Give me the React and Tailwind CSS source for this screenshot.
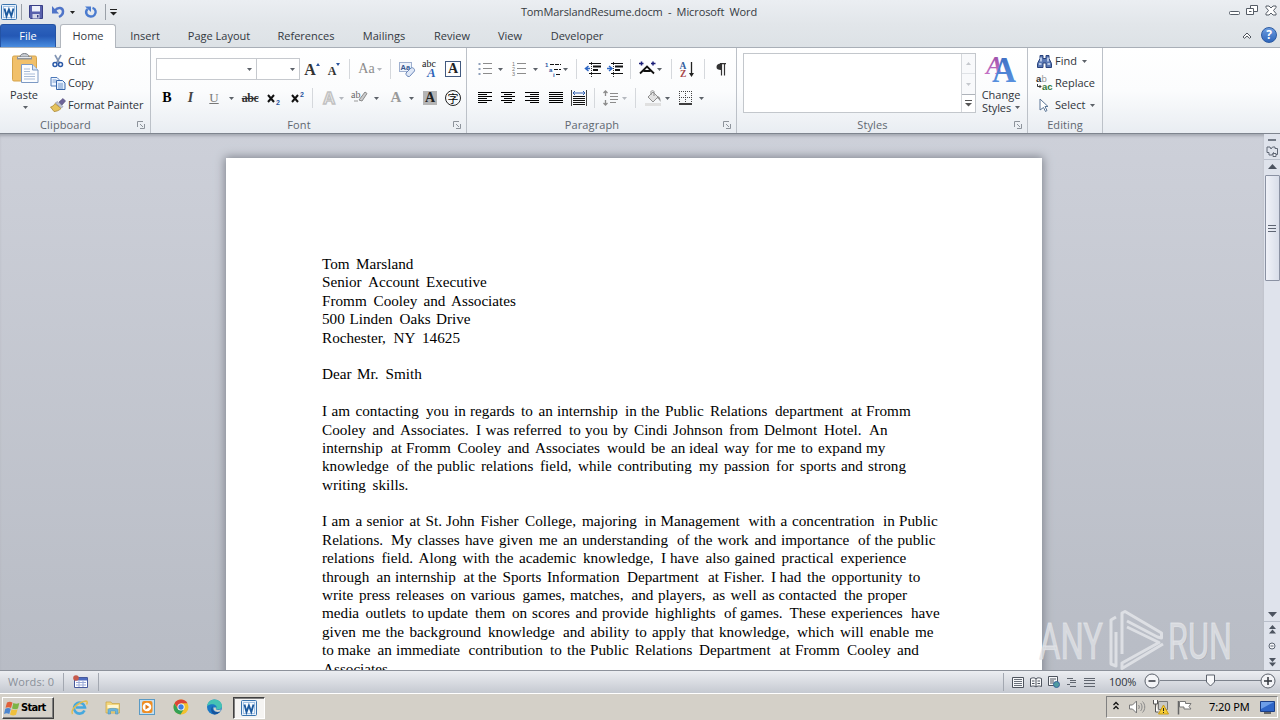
import clsx from "clsx";

const tabs = [
  { name: "Insert", width: "w-[58px]" },
  { name: "Page Layout", width: "w-[90px]" },
  { name: "References", width: "w-[84px]" },
  { name: "Mailings", width: "w-[72px]" },
  { name: "Review", width: "w-[64px]" },
  { name: "View", width: "w-[52px]" },
  { name: "Developer", width: "w-[82px]" },
];

// each line: the words and the x offset of every word from the left margin
const letter = [
  ["Tom Marsland", [0, 34]],
  ["Senior Account Executive", [0, 46, 104]],
  ["Fromm Cooley and Associates", [0, 51.5, 101.5, 129]],
  ["500 Linden Oaks Drive", [0, 27.5, 77.5, 114]],
  ["Rochester, NY 14625", [0, 71.5, 100]],
  null,
  ["Dear Mr. Smith", [0, 35, 63.5]],
  null,
  [
    "I am contacting you in regards to an internship in the Public Relations department at Fromm",
    [0, 9.5, 33.5, 104, 132, 148, 199, 216.5, 235, 303, 319, 343, 388, 453, 529, 544],
  ],
  [
    "Cooley and Associates. I was referred to you by Cindi Johnson from Delmont Hotel. An",
    [0, 50.5, 78, 154, 163.5, 191.5, 247, 263, 291, 312, 351, 407, 442, 502, 547],
  ],
  [
    "internship at Fromm Cooley and Associates would be an ideal way for me to expand my",
    [0, 69, 84, 135.5, 185.5, 213, 285, 329, 349, 367, 402, 433, 455, 479, 496, 544],
  ],
  [
    "knowledge of the public relations field, while contributing my passion for sports and strong",
    [0, 74.5, 92, 115, 159, 218, 256, 295.5, 377, 402, 454, 478, 519, 546],
  ],
  ["writing skills.", [0, 50.5]],
  null,
  [
    "I am a senior at St. John Fisher College, majoring in Management with a concentration in Public",
    [0, 9.5, 33.5, 44.5, 87.5, 103.5, 124, 158.5, 203, 260, 322.5, 338.5, 426.5, 458.5, 470, 561, 577],
  ],
  [
    "Relations. My classes have given me an understanding of the work and importance of the public",
    [0, 69, 95.5, 143, 177, 217, 241, 260, 355, 372, 395.5, 432.5, 459, 536, 552.5, 575.5],
  ],
  [
    "relations field. Along with the academic knowledge, I have also gained practical experience",
    [0, 59.5, 96.5, 140.5, 173, 197, 261, 339, 348, 383.5, 412.5, 459.5, 518.5],
  ],
  [
    "through an internship at the Sports Information Department at Fisher. I had the opportunity to",
    [0, 54.5, 73, 141.5, 156, 180.5, 225, 305, 386, 401.5, 449, 457.5, 485, 509.5, 586.5],
  ],
  [
    "write press releases on various games, matches, and players, as well as contacted the proper",
    [0, 37, 74, 128.5, 148.5, 200.5, 248, 309.5, 336, 390.5, 408.5, 440, 456.5, 522, 545.5],
  ],
  [
    "media outlets to update them on scores and provide highlights of games. These experiences have",
    [0, 43.5, 90, 105.5, 153, 190, 210, 253.5, 280, 333, 402, 418, 467.5, 509, 589],
  ],
  [
    "given me the background knowledge and ability to apply that knowledge, which will enable me",
    [0, 40, 63.5, 87.5, 166, 241, 268.5, 313, 330, 369, 397, 475, 518, 547.5, 593],
  ],
  [
    "to make an immediate contribution to the Public Relations Department at Fromm Cooley and",
    [0, 15.5, 55.5, 74, 146.5, 228, 245, 268, 313, 377, 457.5, 473, 525, 575],
  ],
  ["Associates", [1]],
];

const Line = ({ line }) => {
  if (!line) return <div className="h-[18.4px]" />;
  const [text, offsets] = line;
  const words = text.split(" ");
  return (
    <div className="flex h-[18.4px] whitespace-pre leading-[18.4px]">
      {words.map((word, i) => (
        <span
          key={i}
          className="shrink-0"
          style={{
            width: (offsets[i + 1] ?? offsets[i] + 70) - offsets[i],
            marginLeft: i === 0 ? offsets[0] : 0,
          }}
        >
          {word + " "}
        </span>
      ))}
    </div>
  );
};

const Svg = ({ w, h, className, children }) => (
  <svg
    width={w}
    height={h}
    viewBox={`0 0 ${w} ${h}`}
    className={clsx("shrink-0 overflow-visible", className)}
    fill="none"
  >
    {children}
  </svg>
);

const Slot = ({ className, children }) => (
  <div className={clsx("flex h-[22px] shrink-0 items-center justify-center", className)}>{children}</div>
);

const Arrow = ({ dim, className }) => (
  <Svg w={5} h={3} className={className}>
    <path d="M0 0h5L2.500 3z" fill={dim ? "#b4b8be" : "#5c6168"} />
  </Svg>
);

const Sep = () => <div className="h-5 w-px bg-[#d5d8dc]" />;

const Launcher = () => (
  <Svg w={8} h={8}>
    <path d="M.5 6V.5H6" stroke="#8d939b" />
    <path d="M3 3l3 3M7.5 3v4.500H3" stroke="#8d939b" />
  </Svg>
);

const Group = ({ title, width, launcher, children }) => (
  <div className={clsx("flex h-[85px] shrink-0 flex-col border-r border-[#bcc1c8]", width)}>
    <div className="h-[69px]">{children}</div>
    <div className="flex h-4 items-center pr-[5px] text-[#5f6770]">
      <span className={clsx("flex-1 text-center tracking-[0.1px]", launcher ? "pr-[6px]" : "pl-[5px]")}>{title}</span>
      {launcher && <Launcher />}
    </div>
  </div>
);

const Lines = ({ rows, color = "#000", w = 14 }) => (
  <Svg w={w} h={13}>
    {rows.map(([x, len], i) => (
      <path key={i} d={`M${x} ${i * 2 + 0.5}h${len}`} stroke={color} />
    ))}
  </Svg>
);

const Scissors = () => (
  <Svg w={12} h={14}>
    <path d="M3 1l4.500 8M9 1L4.500 9" stroke="#8295b4" strokeWidth="1.6" />
    <circle cx="3" cy="10.500" r="2" stroke="#2c5aa8" strokeWidth="1.5" />
    <circle cx="8.500" cy="10.500" r="2" stroke="#2c5aa8" strokeWidth="1.5" />
  </Svg>
);

const CopyIcon = () => (
  <Svg w={16} h={14}>
    <path d="M1 1.500h6l2 2V10H1z" fill="#eef5ff" stroke="#4c78b8" />
    <path d="M2.500 4h4M2.500 6h4" stroke="#7d9fd0" />
    <path d="M6.500 4.500h6l2.500 2.500v6.500H6.500z" fill="#e6f0fd" stroke="#3766ab" />
    <path d="M8 8h5M8 10h5M8 12h5" stroke="#6d93cb" />
  </Svg>
);

const Brush = () => (
  <Svg w={16} h={14}>
    <path d="M9 4l4-3.500L15.500 3 12 7z" fill="#6d6399" stroke="#4a4372" strokeWidth=".6" />
    <path d="M7 3.500l6 5-1.500 1.500-6-5z" fill="#c3c7d6" stroke="#70758e" strokeWidth=".5" />
    <path d="M5 5.500l6 5c-2 2-4.500 3-7 3L.5 9C2.500 8.500 4 7.500 5 5.500z" fill="#e5c35c" stroke="#a07b25" strokeWidth=".7" />
  </Svg>
);

const PasteIcon = () => (
  <Svg w={27} h={31}>
    <rect x=".5" y="3" width="24" height="25" rx="1.500" fill="#f1c06a" stroke="#d5a44c" />
    <path d="M5 3.500h15v3H5z" fill="#8f949b" />
    <path d="M8 4c0-2 2-3.500 4.500-3.500S17 2 17 4z" fill="#c8ccd2" stroke="#777c84" />
    <path d="M6 4.500h13" stroke="#e8eaed" />
    <path d="M9.500 11.500h11l5.500 5.500v12.500H9.500z" fill="#fbfdff" stroke="#7d9ac4" />
    <path d="M20.500 11.500V17H26" fill="#d6e3f4" stroke="#7d9ac4" />
    <path d="M12 16h6M12 18.500h6M12 21h11M12 23.500h11M12 26h11" stroke="#a9bcd8" />
  </Svg>
);

const Clipboard = () => (
  <Group title="Clipboard" width="w-[151px]" launcher>
    <div className="flex pt-[2px]">
      <div className="flex w-12 flex-col items-center pl-[2px] pt-[3px]">
        <PasteIcon />
        <span className="mt-[4px] -ml-[2px] leading-[14px]">Paste</span>
        <Arrow className="mt-[4px]" />
      </div>
      <div className="flex flex-col">
        {[
          ["Cut", Scissors],
          ["Copy", CopyIcon],
          ["Format Painter", Brush],
        ].map(([name, Icon]) => (
          <div key={name} className="flex h-[22px] items-center">
            <div className="flex w-5 justify-center">
              <Icon />
            </div>
            <span className="tracking-[-0.1px]">{name}</span>
          </div>
        ))}
      </div>
    </div>
  </Group>
);

const FontGroup = () => (
  <Group title="Font" width="w-[316px]" launcher>
    <div className="flex pl-[5px] pt-[10px]">
      <div className="flex h-[22px] w-[101px] items-center justify-end border border-[#c6c9ce] bg-white pr-1">
        <Arrow />
      </div>
      <div className="flex h-[22px] w-[43px] items-center justify-end border border-l-0 border-[#c6c9ce] bg-white pr-1">
        <Arrow />
      </div>
      <Slot className="w-6">
        <span className="pt-[2px] font-['Liberation_Serif',serif] text-[16px] font-bold text-[#333]">A</span>
        <Svg w={4} h={12}>
          <path d="M0 3l2-3 2 3z" fill="#29549e" />
        </Svg>
      </Slot>
      <Slot className="w-5">
        <span className="pt-1 font-['Liberation_Serif',serif] text-[12px] font-bold text-[#333]">A</span>
        <Svg w={4} h={12}>
          <path d="M0 0h4L2 3z" fill="#29549e" />
        </Svg>
      </Slot>
      <Slot className="w-[11px]"><Sep /></Slot>
      <Slot className="w-[30px] gap-[2px]">
        <span className="font-['Liberation_Serif',serif] text-[14px] text-[#8c8c8c]">Aa</span>
        <Arrow dim />
      </Slot>
      <Slot className="w-[10px]"><Sep /></Slot>
      <Slot className="w-6">
        <Svg w={17} h={17}>
          <rect x=".5" y="1.500" width="12" height="9" fill="#eef3fb" stroke="#9fb0cf" />
          <text x="1.500" y="9" fontSize="7.500" fontWeight="bold" fill="#35578f" fontFamily="Liberation Sans">Aa</text>
          <path d="M7 12l5-5c2-1 4 1 3.500 3l-5 5.500c-2 .5-4-1.500-3.500-3.500z" fill="#dfe8f7" stroke="#6a86b8" />
        </Svg>
      </Slot>
      <Slot className="w-[22px]">
        <Svg w={16} h={18}>
          <text x="0" y="7" fontSize="10" fill="#222" fontFamily="Liberation Serif" textLength="14">abc</text>
          <text x="5" y="17" fontSize="13" fontWeight="bold" fontStyle="italic" fill="#2e63b8" fontFamily="Liberation Serif">A</text>
        </Svg>
      </Slot>
      <Slot className="w-6">
        <div className="flex size-4 items-center justify-center border border-[#41597f] font-['Liberation_Serif',serif] text-[14px] font-bold text-[#222]">A</div>
      </Slot>
    </div>
    <div className="mt-[7px] flex pl-[5px] font-['Liberation_Serif',serif] text-black">
      <Slot className="w-[22px] text-[14px] font-black">B</Slot>
      <Slot className="w-[25px] text-[14px] font-bold italic text-[#444]">I</Slot>
      <Slot className="w-[22px] text-[13px] text-[#777] underline">U</Slot>
      <Slot className="w-3"><Arrow /></Slot>
      <Slot className="w-[26px] text-[12px] font-bold tracking-[-0.5px] text-[#333] line-through">abc</Slot>
      <Slot className="w-[21px]">
        <Svg w={13} h={14}>
          <path d="M1 4l6 7M7 4l-6 7" stroke="#111" strokeWidth="2" />
          <text x="9" y="13.500" fontSize="7" fontWeight="bold" fill="#29549e" fontFamily="Liberation Sans">2</text>
        </Svg>
      </Slot>
      <Slot className="w-[26px]">
        <Svg w={13} h={14}>
          <path d="M1 4l6 7M7 4l-6 7" stroke="#111" strokeWidth="2" />
          <text x="9" y="5.500" fontSize="7" fontWeight="bold" fill="#29549e" fontFamily="Liberation Sans">2</text>
        </Svg>
      </Slot>
      <Slot className="w-1"><Sep /></Slot>
      <Slot className="ml-[6px] w-[18px]">
        <Svg w={17} h={17}>
          <text x="2" y="14" fontSize="17" fontWeight="bold" fill="#fff" stroke="#c2c2c2" strokeWidth="1.5" fontFamily="Liberation Sans">A</text>
        </Svg>
      </Slot>
      <Slot className="w-[6px]"><Arrow dim /></Slot>
      <Slot className="ml-[2px] w-7 pb-1">
        <Svg w={18} h={14}>
          <text x="0" y="9" fontSize="10" fill="#666" fontFamily="Liberation Serif">ab</text>
          <path d="M8 11l6-8 2 1.500-5 7.500z" fill="#ccc" stroke="#8a8a8a" />
          <path d="M3 12h4" stroke="#999" />
        </Svg>
      </Slot>
      <Slot className="w-[5px]"><Arrow /></Slot>
      <Slot className="ml-[5px] w-6 pb-[3px] text-[15px] font-bold text-[#9a9a9a]">A</Slot>
      <Slot className="w-[6px]"><Arrow /></Slot>
      <Slot className="ml-[5px] w-[22px]">
        <div className="flex h-[14px] w-[14px] items-center justify-center bg-[#b5b5b5] text-[14px] font-bold text-[#222]">A</div>
      </Slot>
      <Slot className="w-6">
        <div className="flex size-4 items-center justify-center rounded-full border border-[#222] font-['Noto_Sans_CJK_SC',sans-serif] text-[11px] leading-none">字</div>
      </Slot>
    </div>
  </Group>
);

const full = [0, 14];
const Bullets = ({ numbers }) => (
  <Svg w={14} h={14}>
    {[2, 7, 12].map((y, i) => (
      <g key={y}>
        {numbers ? (
          <text x="0" y={y + 2} fontSize="5.500" fill="#777" fontFamily="Liberation Sans">{i + 1}</text>
        ) : (
          <rect x=".5" y={y - 1} width="2" height="2" fill="#8fa0ba" />
        )}
        <path d={`M5 ${y + 0.5 - 1}h9`} stroke="#8c8c8c" />
      </g>
    ))}
  </Svg>
);

const Indent = ({ right }) => (
  <Svg w={16} h={15}>
    <path d="M4 1.500h12M4 11.500h12" stroke="#111" />
    <path d="M8 4.500h8M8 8h5" stroke="#111" strokeWidth="2" />
    <path d="M6.500 0v15" stroke="#333" strokeDasharray="1 1" />
    {right ? (
      <path d="M0 6.500h4M2 4l3 2.500L2 9" stroke="#2f68c5" strokeWidth="1.5" />
    ) : (
      <path d="M5 6.500H1M3.500 4l-3 2.500 3 2.500" stroke="#2f68c5" strokeWidth="1.5" />
    )}
  </Svg>
);

const ParagraphGroup = () => (
  <Group title="Paragraph" width="w-[270px]" launcher>
    <div className="flex pl-[7px] pt-[10px]">
      <Slot className="w-[21px]"><Bullets /></Slot>
      <Slot className="w-[10px]"><Arrow /></Slot>
      <Slot className="w-7"><Bullets numbers /></Slot>
      <Slot className="w-1"><Arrow /></Slot>
      <Slot className="ml-2 w-4">
        <Svg w={16} h={15}>
          <text x="0" y="5" fontSize="6" fontWeight="bold" fill="#29549e" fontFamily="Liberation Sans">1</text>
          <text x="4" y="10" fontSize="6" fontWeight="bold" fill="#29549e" fontFamily="Liberation Sans">a</text>
          <text x="8" y="15" fontSize="6" fontWeight="bold" fill="#29549e" fontFamily="Liberation Sans">i</text>
          <path d="M5 2.500h11M9 7.500h7M11 12.500h5" stroke="#111" strokeDasharray="4 1" />
        </Svg>
      </Slot>
      <Slot className="w-2"><Arrow /></Slot>
      <Slot className="w-[15px]"><Sep /></Slot>
      <Slot className="w-[18px]"><Indent /></Slot>
      <Slot className="w-[26px]"><Indent right /></Slot>
      <Slot className="w-1"><Sep /></Slot>
      <Slot className="ml-[7px] w-4">
        <Svg w={17} h={14} className="-mt-[2px]">
          <path d="M1 12.500l7-7 7 7M4.500 10h7" stroke="#111" strokeWidth="1.800" />
          <path d="M0 2.500h4.500M2.500.5v4M12 2.500h4.500M14 .5v4" stroke="#1c1f78" strokeWidth="1.500" />
        </Svg>
      </Slot>
      <Slot className="w-2"><Arrow /></Slot>
      <Slot className="w-4"><Sep /></Slot>
      <Slot className="w-4">
        <Svg w={16} h={17}>
          <text x="0.500" y="8" fontSize="9.500" fontWeight="bold" fill="#33609f" fontFamily="Liberation Serif">A</text>
          <text x="1" y="16" fontSize="9.500" fontWeight="bold" fill="#a8474b" fontFamily="Liberation Serif">Z</text>
          <path d="M12.500 1v13" stroke="#222" strokeWidth="1.3" />
          <path d="M10 12h5l-2.500 4z" fill="#222" />
        </Svg>
      </Slot>
      <Slot className="w-[18px]"><Sep /></Slot>
      <Slot className="w-4">
        <Svg w={10} h={13}>
          <path d="M5 .5C2 .5.500 1.700.500 4S2 7 5 7z" fill="#333" />
          <path d="M4 .7h6M5.500 1v11.500M8.500 1v11.500" stroke="#333" strokeWidth="1.200" />
        </Svg>
      </Slot>
    </div>
    <div className="mt-[7px] flex pl-[7px]">
      <Slot className="w-[22px]"><Lines rows={[full, [0, 9], full, [0, 9], full, [0, 9]]} /></Slot>
      <Slot className="w-6"><Lines rows={[full, [3, 8], full, [3, 8], full, [3, 8]]} /></Slot>
      <Slot className="w-6"><Lines rows={[full, [5, 9], full, [5, 9], full, [5, 9]]} /></Slot>
      <Slot className="w-6"><Lines rows={[full, full, full, full, full, full]} /></Slot>
      <Slot className="w-[22px]">
        <Svg w={16} h={16}>
          <path d="M.5 0v16M15.500 0v16" stroke="#444" />
          <path d="M2 3h12M4 1L2 3l2 2M12 1l2 2-2 2" stroke="#2f5fae" />
          <path d="M2 6.500h12M2 8.500h12M2 10.500h12M2 12.500h12M2 14.500h12" stroke="#111" />
        </Svg>
      </Slot>
      <Slot className="w-[9px]"><Sep /></Slot>
      <Slot className="w-[22px] pl-[2px]">
        <Svg w={16} h={16}>
          <path d="M2.500 1v5M.5 3l2-2 2 2M2.500 15v-5M.5 13l2 2 2-2" stroke="#8c8c8c" strokeWidth="1.300" />
          <path d="M7 3.500h8M7 6.500h8M7 9.500h8M7 12.500h6" stroke="#8c8c8c" />
        </Svg>
      </Slot>
      <Slot className="w-[6px]"><Arrow dim /></Slot>
      <Slot className="w-[17px]"><Sep /></Slot>
      <Slot className="w-[18px]">
        <Svg w={17} h={16}>
          <path d="M3 7l5-5 5 5-5 5z" fill="#e2e2e2" stroke="#8f8f8f" />
          <path d="M6 5V1.500c0-1 3-1 3 0V6" stroke="#8f8f8f" />
          <path d="M12 6c2 0 4 2 3.500 6-1-2-1.500-3-3.500-4z" fill="#8f8f8f" />
          <path d="M0 14.500h16" stroke="#e0e0e0" strokeWidth="3" />
        </Svg>
      </Slot>
      <Slot className="w-[10px]"><Arrow /></Slot>
      <Slot className="w-[27px]">
        <Svg w={13} h={14}>
          <path d="M0 .5h13M0 6.500h13M.5 0v12M6.500 0v12M12.500 0v12" stroke="#444" strokeDasharray="1 1" />
          <path d="M0 13h13" stroke="#000" strokeWidth="1.500" />
        </Svg>
      </Slot>
      <Slot className="w-1"><Arrow /></Slot>
    </div>
  </Group>
);

const StylesGroup = () => (
  <Group title="Styles" width="w-[291px]" launcher>
    <div className="flex pl-[6px] pt-[5px]">
      <div className="flex h-[60px] w-[233px] border border-[#c3c7cc] bg-white">
        <div className="flex-1" />
        <div className="flex w-[14px] flex-col border-l border-[#d4d7db]">
          <div className="flex h-5 items-center justify-center border-b border-[#dfe2e6] bg-[#f8f9fb]">
            <Svg w={5} h={3}><path d="M0 3h5L2.500 0z" fill="#c5c8cd" /></Svg>
          </div>
          <div className="flex h-5 items-center justify-center bg-[#f8f9fb]">
            <Svg w={5} h={3}><path d="M0 0h5L2.500 3z" fill="#c5c8cd" /></Svg>
          </div>
          <div className="flex flex-1 items-center justify-center border-t border-[#aeb3ba]">
            <Svg w={7} h={7}>
              <path d="M0 .5h7" stroke="#555" />
              <path d="M0 3h7L3.500 6.500z" fill="#555" />
            </Svg>
          </div>
        </div>
      </div>
      <div className="flex w-[50px] flex-col items-center">
        <Svg w={30} h={30}>
          <defs>
            <linearGradient id="purpleA" x1="0" y1="0" x2="0" y2="1">
              <stop offset="0" stopColor="#9048a4" />
              <stop offset="1" stopColor="#d07acb" />
            </linearGradient>
            <linearGradient id="blueA" x1="0" y1="0" x2="0" y2="1">
              <stop offset="0" stopColor="#3b67bd" />
              <stop offset="1" stopColor="#5e9ae6" />
            </linearGradient>
          </defs>
          <text x="0" y="20.500" fontSize="26" fontStyle="italic" fontWeight="bold" fill="url(#purpleA)" fontFamily="Liberation Serif">A</text>
          <text x="6" y="29" fontSize="36" fontWeight="bold" fill="url(#blueA)" fontFamily="Liberation Serif" textLength="24" lengthAdjust="spacingAndGlyphs">A</text>
        </Svg>
        <span className="mt-[5px] text-center leading-[13px]">Change</span>
        <span className="flex items-center gap-1 leading-[13px] tracking-[-0.1px]">
          Styles <Arrow />
        </span>
      </div>
    </div>
  </Group>
);

const Binoculars = () => (
  <Svg w={15} h={13}>
    <path d="M3 .5h3v3h3v-3h3v3l2.500 5v4H9V8H6v4.500H.5v-4L3 3.500z" fill="#5a78b4" stroke="#28427c" />
    <path d="M2 9h2.500M10.500 9H13M4 2.500v4M11 2.500v4" stroke="#d3e0f5" strokeWidth="1.500" />
  </Svg>
);

const ReplaceIcon = () => (
  <Svg w={17} h={16}>
    <text x="0" y="7" fontSize="9.500" fontWeight="bold" fill="#333" fontFamily="Liberation Sans">a</text>
    <text x="5.500" y="7" fontSize="9.500" fill="#999" fontFamily="Liberation Sans">b</text>
    <path d="M1.500 9v2.500H5M3.500 10l1.500 1.500L3.500 13" stroke="#333" />
    <text x="6" y="14.500" fontSize="9.500" fontWeight="bold" fill="#33793a" fontFamily="Liberation Sans">ac</text>
  </Svg>
);

const Cursor = () => (
  <Svg w={10} h={14} className="-ml-[2px]">
    <path d="M1 1l8 7.500H6l2 4-1.500 1-2-4L1 12z" fill="#fff" stroke="#5a7596" />
  </Svg>
);

const EditingGroup = () => (
  <Group title="Editing" width="w-[75px]">
    <div className="pl-[6px] pt-[2px]">
      {[
        ["Find", Binoculars, true],
        ["Replace", ReplaceIcon],
        ["Select", Cursor, true],
      ].map(([name, Icon, menu]) => (
        <div key={name} className="flex h-[22px] items-center">
          <div className="flex w-[21px] justify-center"><Icon /></div>
          <span>{name}</span>
          {menu && <Arrow className="ml-[5px]" />}
        </div>
      ))}
    </div>
  </Group>
);

const WordLogo = ({ size = 16 }) => (
  <svg width={size} height={size} viewBox="0 0 16 16" className="shrink-0">
    <rect x=".5" y=".5" width="15" height="15" rx="1" fill="#e9f1fb" stroke="#3a74ae" />
    <rect x="2.500" y="2.500" width="11" height="11" fill="#f7fbff" stroke="#a4c3e4" />
    <path d="M3.500 4.500L5.500 12l2.400-6.500L10.300 12l2.200-7.500" fill="none" stroke="#1d5a9e" strokeWidth="1.900" />
  </svg>
);

const TitleBar = () => (
  <div className="flex h-6 items-center bg-linear-to-b from-[#ebeef2] to-[#e2e6ea]">
    <div className="flex w-[420px] items-center pl-[1px]">
      <WordLogo />
      <div className="ml-1 h-4 w-px bg-[#9aa0a8]" />
      <Svg w={14} h={14} className="ml-[7px]">
        <path d="M.5.500h13v13h-12l-1-1z" fill="#5961ac" stroke="#393f86" />
        <path d="M3 1h8v5.500H3z" fill="#eef1fa" />
        <path d="M3.500 9h7v4.500h-7z" fill="#d3d6e8" />
        <path d="M8 10h1.500v2.500H8z" fill="#393f86" />
      </Svg>
      <Svg w={13} h={14} className="ml-[9px]">
        <path d="M3 5.500c3-4 8-3 8 1 0 3-2 4.500-4 5.500" stroke="#4f74c8" strokeWidth="2.500" />
        <path d="M0 1v7.500h7z" fill="#4f74c8" />
      </Svg>
      <Svg w={5} h={3} className="ml-[5px]"><path d="M0 0h5L2.500 3z" fill="#222" /></Svg>
      <Svg w={13} h={13} className="ml-[9px]">
        <path d="M8.500 1.800c3.500 1 4 5 2 7.200-2 2.300-6 2-7.700-.5C1.700 6.500 2 4.500 3.500 3" stroke="#4a7bcf" strokeWidth="2.400" />
        <path d="M1 .5h6V6z" fill="#4a7bcf" />
      </Svg>
      <div className="ml-[8px] h-4 w-px bg-[#9aa0a8]" />
      <Svg w={7} h={7} className="ml-[4px]">
        <path d="M0 .5h7" stroke="#222" />
        <path d="M0 3h7L3.500 6.500z" fill="#222" />
      </Svg>
    </div>
    <div className="w-[438px] text-center text-[11px] tracking-[-0.1px] [word-spacing:2.500px] text-[#353a41]">
      TomMarslandResume.docm - Microsoft Word
    </div>
    <div className="flex flex-1 items-start justify-end gap-[7px] pr-[3px] pb-[5px]">
      <Svg w={11} h={14}><rect x=".5" y="8.500" width="10" height="3" rx="1" stroke="#555c66" fill="#fff" /></Svg>
      <Svg w={12} h={14} className="-ml-[1px]">
        <path d="M4.500 2.500h7v6h-7z" stroke="#555c66" fill="#fff" />
        <path d="M.5 5.500h7v6h-7z" stroke="#555c66" fill="#fff" />
        <path d="M3 8.500h2.500" stroke="#555c66" />
      </Svg>
      <Svg w={12} h={14}>
        <path d="M1 3h3l2 2 2-2h3v1.500L8.500 7.500 11 10.500V12H8L6 10l-2 2H1V10.500l2.500-3L1 4.500z" stroke="#555c66" fill="#fff" />
      </Svg>
    </div>
  </div>
);

const TabBar = () => (
  <div className="flex h-6 items-end border-b border-[#a9afb7] bg-linear-to-b from-[#e2e6ea] to-[#dde2e6]">
    <div className="flex h-[23px] w-14 items-center justify-center rounded-t-[3px] border border-b-0 border-[#2453a4] bg-linear-to-b from-[#2f64bd] via-[#2458b5] to-[#4a8de0] text-white">
      File
    </div>
    <div className="-mb-px ml-1 flex h-6 w-[56px] items-center justify-center rounded-t-[3px] border border-b-0 border-[#b2b7be] bg-white pb-[2px] text-[#33383f]">
      Home
    </div>
    <div className="flex flex-1 items-center text-[#33383f]">
      {tabs.map((tab) => (
        <div key={tab.name} className={clsx("flex h-[23px] shrink-0 items-center justify-center", tab.width)}>
          {tab.name}
        </div>
      ))}
    </div>
    <div className="flex h-[23px] items-center gap-[9px] pr-[3px]">
      <Svg w={10} h={7}>
        <path d="M1 5l4-4 4 4-1.500 1.300L5 4 2.500 6.300z" stroke="#4c525b" fill="#fff" />
      </Svg>
      <div className="mb-[1px] flex size-4 items-center justify-center rounded-full border border-[#2d5ba2] bg-linear-to-b from-[#6d9de0] to-[#2f66bb] text-[12px] font-bold text-white">
        ?
      </div>
    </div>
  </div>
);

const ScrollBar = () => (
  <div className="flex w-4 shrink-0 flex-col items-center bg-[#dfe3ec]">
    <div className="mt-[5px] h-[2px] w-2 bg-[#737a86]" />
    <Svg w={12} h={12} className="mt-1">
      <path d="M1 2h3l1 2 1.500-2H9v1.500h2.500v6H9l-1.500-2L6 10H3V7.500H1z" stroke="#5f6774" />
      <path d="M7 8.500h3v3H7z" stroke="#5f6774" fill="#eef0f5" />
    </Svg>
    <div className="mt-[2px] h-px w-4 bg-[#b9bfcb]" />
    <Svg w={9} h={5} className="mt-[4px]"><path d="M0 5h9L4.500 0z" fill="#4d5460" /></Svg>
    <div className="mt-[6px] flex h-[106px] w-[15px] flex-col items-center justify-center gap-[2px] rounded-[1px] border border-[#8b92a3] bg-linear-to-r from-[#f0f2f8] to-[#d8dde9]">
      <div className="h-px w-2 bg-[#5e6573]" />
      <div className="h-px w-2 bg-[#5e6573]" />
      <div className="h-px w-2 bg-[#5e6573]" />
    </div>
    <div className="flex-1" />
    <Svg w={9} h={5}><path d="M0 0h9L4.500 5z" fill="#4d5460" /></Svg>
    <div className="mt-1 h-px w-4 bg-[#b9bfcb]" />
    <Svg w={7} h={9} className="mt-[3px]"><path d="M0 4h7L3.500 0zM0 8.500h7L3.500 4.500z" fill="#4d5460" /></Svg>
    <Svg w={8} h={8} className="mt-[8px]">
      <circle cx="4" cy="4" r="3" stroke="#5f6774" fill="#f4f5f9" />
      <path d="M2.500 4h3" stroke="#5f6774" />
    </Svg>
    <Svg w={7} h={9} className="mb-[3px] mt-[8px]"><path d="M0 0h7L3.500 4zM0 4.500h7L3.500 8.500z" fill="#4d5460" /></Svg>
  </div>
);

const Watermark = () => (
  <svg width="212" height="66" viewBox="0 0 212 66" className="absolute bottom-0 right-[36px]" fill="none">
    <g fontFamily="Roboto" fontSize="50" fontWeight="400">
      <g fill="#000" fillOpacity=".08">
        <text x="7" y="56" textLength="64" lengthAdjust="spacingAndGlyphs">ANY</text>
        <text x="137" y="56" textLength="64" lengthAdjust="spacingAndGlyphs">RUN</text>
      </g>
      <g fill="#e3e5e9" fillOpacity=".8" stroke="#e3e5e9" strokeOpacity=".8" strokeWidth=".8">
        <text x="7" y="55" textLength="64" lengthAdjust="spacingAndGlyphs">ANY</text>
        <text x="136" y="55" textLength="64" lengthAdjust="spacingAndGlyphs">RUN</text>
      </g>
    </g>
    <g stroke="#e3e5e9" strokeOpacity=".85" strokeWidth="3" strokeLinejoin="round">
      <path d="M84 13l-5 3v44l5 2V28" />
      <path d="M90 50V9l3-1.500L129.500 29v5l-4-1L95 17" />
      <path d="M95 23l32 15.500L90 59v5.500L131 40" />
    </g>
  </svg>
);

const StatusBar = () => (
  <div className="flex h-[23px] items-center border-t border-[#8d929b] bg-linear-to-b from-[#eceef2] to-[#c5c9d1] text-[#8a9099]">
    <span className="w-[63px] pl-2 tracking-[0.1px]">Words: 0</span>
    <div className="h-[18px] w-px bg-[#a3a8b1]" />
    <Svg w={15} h={13} className="ml-[9px] -mt-[2px]">
      <path d="M1.500 2.500h13v10h-13z" fill="#fff" stroke="#46599c" />
      <path d="M2 3h12v2.500H2z" fill="#4f6cc0" />
      <path d="M3 7.500h10M3 10h10M6 6v6M10 6v6" stroke="#9aaad8" />
      <circle cx="3" cy="3" r="2.800" fill="#c65a4c" />
    </Svg>
    <div className="ml-[10px] h-[18px] w-px bg-[#a3a8b1]" />
    <div className="flex-1" />
    <div className="h-[18px] w-px bg-[#a3a8b1]" />
    <Svg w={12} h={11} className="ml-2">
      <path d="M.5.500h11v10H.5z" fill="#f7f8fa" stroke="#4e545e" />
      <path d="M2 2.500h8M2 4.500h8M2 6.500h8M2 8.500h8" stroke="#6a707a" />
    </Svg>
    <Svg w={12} h={11} className="ml-[6px]">
      <path d="M.5 1.500C3 .5 5 .5 6 2c1-1.500 3-1.500 5.500-.5v8C9 8.500 7 9 6 10 5 9 3 8.500.5 9.500zM6 2v8" fill="#f7f8fa" stroke="#4e545e" />
      <path d="M2 4h2.500M2 6.500h2.500M7.500 4H10M7.500 6.500H10" stroke="#4e545e" />
    </Svg>
    <Svg w={12} h={12} className="ml-[6px]">
      <path d="M.5.500h9v9h-9z" fill="#f7f8fa" stroke="#4e545e" />
      <path d="M2 3h6M2 5h4M2 7h4" stroke="#4e545e" />
      <circle cx="8.500" cy="8.500" r="3" fill="#4f9ba0" stroke="#35649d" />
    </Svg>
    <Svg w={11} h={11} className="ml-[6px]">
      <path d="M1 1.500h6M4 3.500h6M4 5.500h6M1 7.500h3M4 9.500h6" stroke="#5f656e" />
    </Svg>
    <Svg w={11} h={11} className="ml-[7px]">
      <path d="M0 1.500h11M0 3.500h11M0 6.500h11M0 9.500h11" stroke="#5f656e" />
    </Svg>
    <span className="ml-[14px] w-[35px] text-[11px] tracking-[-0.2px] text-[#2f343b]">100%</span>
    <Svg w={133} h={16} className="-mt-[2px]">
      <circle cx="8" cy="8" r="7" fill="#f3f4f7" stroke="#5c626c" />
      <path d="M4.500 8h7" stroke="#30353c" strokeWidth="1.500" />
      <path d="M16 7.500h101" stroke="#7d838d" />
      <path d="M62.500 2h8v7l-4 4-4-4z" fill="#f7f8fa" stroke="#5c626c" />
      <circle cx="124" cy="8" r="7" fill="#f3f4f7" stroke="#5c626c" />
      <path d="M120 8h8M124 4v8" stroke="#30353c" strokeWidth="1.500" />
    </Svg>
    <div className="w-[3px]" />
  </div>
);

const Taskbar = () => (
  <div className="flex h-[27px] items-center border-t border-white bg-[#d4d0c8] text-black">
    <div className="ml-[2px] mt-[1px] flex h-[22px] w-[52px] items-center border border-b-[#404040] border-l-white border-r-[#404040] border-t-white pl-[1px] shadow-[inset_-1px_-1px_0_#808080]">
      <Svg w={17} h={16}>
        <path d="M3 2.500c2-1 4-1 5.500.3L7 8C5.500 7 3.500 7 1.500 7.800z" fill="#e0603a" />
        <path d="M9.300 3c2 1 4 1 6 0L14 8.500c-2 1-4 .800-6 0z" fill="#7cb445" />
        <path d="M1.300 8.800c2-1 4-.800 5.500 0L5.300 14c-1.800-1-3.500-1-5.300 0z" fill="#4c86cf" />
        <path d="M7.600 9.300c2 .800 4 1 6 0L12 14.800c-2 1-4 1-6-.300z" fill="#f0c03c" />
      </Svg>
      <span className="font-['DejaVu_Sans',sans-serif] text-[11px] font-bold tracking-[-0.7px] [font-stretch:condensed]">Start</span>
    </div>
    <Svg w={17} h={17} className="ml-[17px]">
      <path d="M13.500 11.500A5.500 5.500 0 1 1 14 8.500H5" stroke="#45a8de" strokeWidth="2.600" />
      <path d="M1.500 15C-1 11 7 3 15 2c1.500 0 1.500 2 .5 3.500" stroke="#e3bd4e" strokeWidth="1.500" />
    </Svg>
    <Svg w={16} h={15} className="ml-[17px]">
      <path d="M1 2h5l1 1.500h7.500V13H1z" fill="#f3d67c" stroke="#c7a344" strokeWidth=".7" />
      <path d="M2.500 5h11v3h-11z" fill="#fff6d0" />
      <path d="M3 14v-4.500C3 8 13 8 13 9.500V14h-2.500v-3h-5v3z" fill="#6bb4dd" stroke="#4b93bf" strokeWidth=".6" />
    </Svg>
    <Svg w={16} h={16} className="ml-[18px]">
      <rect x=".5" y=".5" width="15" height="15" fill="#c5dff0" stroke="#5a9ac4" />
      <rect x="3" y="2" width="10.500" height="12" rx="2" fill="#ef8e24" />
      <circle cx="8" cy="8" r="4.300" fill="#fff" />
      <path d="M6.500 5.500l4 2.500-4 2.500z" fill="#e07a1a" />
    </Svg>
    <Svg w={16} h={16} className="ml-[18px]">
      <circle cx="8" cy="8" r="7.500" fill="#f2c12e" />
      <path d="M1.500 4.300A7.500 7.500 0 0 1 14.500 4.300H8L5 10z" fill="#dc4437" />
      <path d="M1.400 4.400A7.500 7.500 0 0 0 7.500 15.500L11 10H5z" fill="#33a155" />
      <circle cx="8" cy="8" r="3.600" fill="#fff" />
      <circle cx="8" cy="8" r="2.700" fill="#3f7fe0" />
    </Svg>
    <Svg w={17} h={16} className="ml-[17px]">
      <circle cx="8.500" cy="8" r="7.500" fill="#1b78c4" />
      <path d="M1 7C2 2.500 5 .500 8.500.500c4.500 0 7.500 3 7.500 6.500 0 2-1.500 3.500-4 3.500-2 0-2.500-1-1.500-2 1-2-4-5.500-9.500-1.500z" fill="#45c2b4" />
      <path d="M7 7c-2 4 2 7.500 7 5.500-1.500 2-3.500 3-5.500 3C5 15 4 9 7 7z" fill="#16549d" />
      <path d="M10 8.500c-1 2.500 2 3 5 2l-1 2c-4 1.500-7-1-6.500-4z" fill="#d4d0c8" />
    </Svg>
    <div className="ml-[10px] mt-[1px] flex h-[22px] w-[32px] items-center justify-center border border-b-white border-l-[#404040] border-r-white border-t-[#404040] bg-[#f5f4f2] shadow-[inset_1px_1px_0_#808080]">
      <WordLogo />
    </div>
    <div className="flex-1" />
    <div className="mr-[2px] flex h-[22px] w-[172px] items-center border border-b-white border-l-[#808080] border-r-white border-t-[#808080]">
      <Svg w={6} h={9} className="ml-[6px] -mt-[3px]">
        <path d="M.5 4L3 1.500 5.500 4M.5 8L3 5.500 5.500 8" stroke="#111" strokeWidth="1.300" />
      </Svg>
      <Svg w={16} h={14} className="ml-[10px]">
        <path d="M.5 5h3L7.500 1v12l-4-4h-3z" fill="#fff" stroke="#777" />
        <path d="M9.500 5c1 1 1 3 0 4M11.500 3c2 2 2 6 0 8M13.500 1.500c3 3 3 8 0 11" stroke="#888" />
      </Svg>
      <Svg w={17} h={16} className="ml-[8px]">
        <path d="M5.500 2.500h9v8h-9z" fill="#c8c8c4" stroke="#777" />
        <path d="M.5 1v4h4V1M2.500 5v8h3" stroke="#555" fill="#fff" />
        <path d="M10.500 6l5 9h-10z" fill="#f6cd36" stroke="#c99a12" />
        <path d="M10.500 9v3M10.500 13v1" stroke="#222" />
      </Svg>
      <Svg w={15} h={15} className="ml-[7px]">
        <path d="M1.500 1v13.500" stroke="#666" strokeWidth="1.500" />
        <path d="M2.500 1.500h6v2h5.500l-2 3 2 2.500H7V7H2.500z" fill="#fff" stroke="#777" />
      </Svg>
      <span className="ml-[17px] w-[51px] whitespace-nowrap font-['Noto_Sans',sans-serif] text-[11px] tracking-[-0.1px]">7:20 PM</span>
      <Svg w={15} h={13}>
        <path d="M.5.500h14v10H.5z" fill="#2f66c8" stroke="#1c3f86" />
        <path d="M1 1h13L1 8z" fill="#6d9ee8" />
        <path d="M4 12h7" stroke="#444" strokeWidth="1.500" />
      </Svg>
    </div>
  </div>
);

export default function App() {
  return (
    <div className="flex h-[720px] w-[1280px] flex-col overflow-hidden font-['Open_Sans','Noto_Sans',sans-serif] text-[11px] leading-[14px] text-[#2f343b]">
      <TitleBar />
      <TabBar />
      <div className="flex h-[86px] border-b border-[#7f858f] bg-linear-to-b from-white via-[#fbfcfd] to-[#e9edf2]">
        <Clipboard />
        <FontGroup />
        <ParagraphGroup />
        <StylesGroup />
        <EditingGroup />
      </div>
      <div className="relative flex h-[536px] bg-linear-to-b from-[#cdd0d9] to-[#b8bcc5]">
        <div className="flex flex-1 overflow-hidden pl-[226px] pt-6 shadow-[inset_0_3px_3px_-1px_#a4a8b1]">
          <div className="h-[700px] w-[816px] shrink-0 bg-white pl-24 pt-[97px] font-['Liberation_Serif',serif] text-[15.2px] text-black shadow-[0_0_9px_1px_#7e828b]">
            {letter.map((line, i) => (
              <Line key={i} line={line} />
            ))}
          </div>
        </div>
        <ScrollBar />
        <Watermark />
      </div>
      <StatusBar />
      <Taskbar />
    </div>
  );
}
